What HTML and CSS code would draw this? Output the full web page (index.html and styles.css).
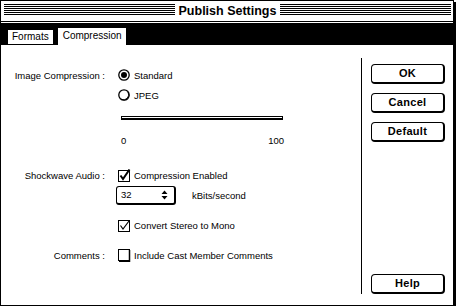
FILE: index.html
```html
<!DOCTYPE html>
<html>

<head>
    <meta charset='utf-8'>
    <title>Publish Settings</title>
    <link rel="stylesheet" href="styles.css">
</head>

<body>
    <div class="window">
        <div class="titlebar">
            <span class="stripes"></span>
            <span class="title">Publish Settings</span>
            <span class="stripes"></span>
        </div>
        <div class="tabbar">
            <span class="tab">Formats</span>
            <span class="tab active">Compression</span>
        </div>
        <div class="content">
            <div class="form">
                <div class="row">
                    <span class="label">Image Compression :</span>
                    <svg class="mark" width="13" height="13" viewBox="0 0 13 13">
                        <circle cx="6" cy="6" r="5.2" fill="#fff" stroke="#000" stroke-width="1.3"/>
                        <circle cx="6" cy="6" r="3" fill="#000"/>
                    </svg>
                    <span>Standard</span>
                </div>
                <div class="row">
                    <span class="label"></span>
                    <svg class="mark" width="13" height="13" viewBox="0 0 13 13">
                        <circle cx="6" cy="6" r="5.2" fill="#fff" stroke="#000" stroke-width="1.3"/>
                        <path d="M10 3 A5.2 5.2 0 0 1 3 10.2" fill="none" stroke="#000" stroke-width="1"/>
                    </svg>
                    <span>JPEG</span>
                </div>
                <div class="slider-row">
                    <div class="slider"></div>
                </div>
                <div class="scale">
                    <span>0</span>
                    <span>100</span>
                </div>
                <div class="row gap-big">
                    <span class="label">Shockwave Audio :</span>
                    <svg class="mark" width="13" height="13" viewBox="0 0 13 13">
                        <rect x="0.5" y="1.5" width="11" height="11" fill="#fff" stroke="#000"/>
                        <path d="M2.5 6.5 L5 10 L11.5 0.5" fill="none" stroke="#000" stroke-width="2"/>
                    </svg>
                    <span>Compression Enabled</span>
                </div>
                <div class="row">
                    <span class="label"></span>
                    <div class="popup">
                        <span>32</span>
                        <svg width="7" height="10" viewBox="0 0 7 10">
                            <path d="M0.5 4 L3.5 0.5 L6.5 4 Z M0.5 6 L3.5 9.5 L6.5 6 Z" fill="#000"/>
                        </svg>
                    </div>
                    <span class="unit">kBits/second</span>
                </div>
                <div class="row gap">
                    <span class="label"></span>
                    <svg class="mark" width="13" height="13" viewBox="0 0 13 13">
                        <rect x="0.5" y="1.5" width="11" height="11" fill="#fff" stroke="#000"/>
                        <path d="M2.5 6.5 L5 10 L11 2" fill="none" stroke="#000" stroke-width="1.2"/>
                    </svg>
                    <span>Convert Stereo to Mono</span>
                </div>
                <div class="row gap">
                    <span class="label">Comments :</span>
                    <svg class="mark" width="13" height="13" viewBox="0 0 13 13">
                        <rect x="0.5" y="0.5" width="11" height="11" fill="#fff" stroke="#000"/>
                        <path d="M11.5 1 V12.5 H1" fill="none" stroke="#000" stroke-width="1.5"/>
                    </svg>
                    <span>Include Cast Member Comments</span>
                </div>
            </div>
            <div class="divider"></div>
            <div class="buttons">
                <span class="btn">OK</span>
                <span class="btn">Cancel</span>
                <span class="btn">Default</span>
                <span class="btn help">Help</span>
            </div>
        </div>
    </div>
</body>
</html>
```

FILE: styles.css
```css
body {
    margin: 0;
    background: #fff;
    color: #000;
    font-family: "Liberation Sans", Arial, sans-serif;
    font-size: 9.5px;
}

.window {
    width: 452px;
    height: 304px;
    border: 1px solid #000;
    box-shadow: 2px 2px 0 #000;
    display: flex;
    flex-direction: column;
}

/* title bar */
.titlebar {
    height: 20px;
    border-bottom: 1px solid #000;
    display: flex;
    align-items: flex-start;
    padding: 0 2px 0 3px;
}

.stripes {
    flex: 1;
    height: 11px;
    margin-top: 3px;
    background: repeating-linear-gradient(#000 0 1px, #fff 1px 2px);
}

.title {
    font-weight: bold;
    font-size: 12.5px;
    line-height: 20px;
    padding: 0 4px;
}

/* tabs */
.tabbar {
    margin-top: 1px;
    height: 22px;
    background: #000;
    display: flex;
    align-items: flex-end;
    padding-left: 7px;
}

.tab {
    background: #fff;
    height: 14px;
    line-height: 14px;
    margin-bottom: 1px;
    padding: 0 4px;
    font-size: 10px;
}

.tab.active {
    height: 17px;
    line-height: 16px;
    margin-bottom: 0;
    margin-left: 5px;
    padding: 0 4px 0 5px;
}

/* content */
.content {
    flex: 1;
    display: flex;
}

.form {
    width: 360px;
    padding-top: 20px;
}

.row {
    display: flex;
    align-items: center;
    height: 20px;
}

.row.gap {
    margin-top: 10px;
}

.row.gap-big {
    margin-top: 19px;
}

.label {
    width: 104px;
    margin-right: 13px;
    text-align: right;
    white-space: nowrap;
}

.mark {
    margin-right: 3px;
    flex: none;
}

.slider-row {
    height: 20px;
    padding-left: 120px;
}

.slider {
    width: 160px;
    height: 1px;
    margin-top: 11px;
    border: 1px solid #000;
    border-bottom-width: 2px;
    background: #fff;
}

.scale {
    height: 10px;
    line-height: 10px;
    margin-left: 120px;
    width: 163px;
    display: flex;
    justify-content: space-between;
}

.popup {
    width: 47px;
    height: 16px;
    margin-left: -2px;
    border: 1px solid #000;
    border-right-width: 2px;
    border-bottom-width: 2px;
    border-radius: 3px;
    display: flex;
    align-items: center;
    justify-content: space-between;
    padding: 0 6px 0 4px;
}

.unit {
    margin-left: 16px;
}

.divider {
    width: 1px;
    background: #000;
    margin: 13px 0 11px;
}

.buttons {
    flex: 1;
    display: flex;
    flex-direction: column;
    gap: 9px;
    padding: 19px 8px 11px 9px;
}

.btn {
    height: 17px;
    line-height: 17px;
    border: 1px solid #000;
    border-right-width: 2px;
    border-bottom-width: 2px;
    border-radius: 4px;
    text-align: center;
    font-weight: bold;
    font-size: 11px;
    letter-spacing: 0.3px;
}

.btn.help {
    margin-top: auto;
}
```
